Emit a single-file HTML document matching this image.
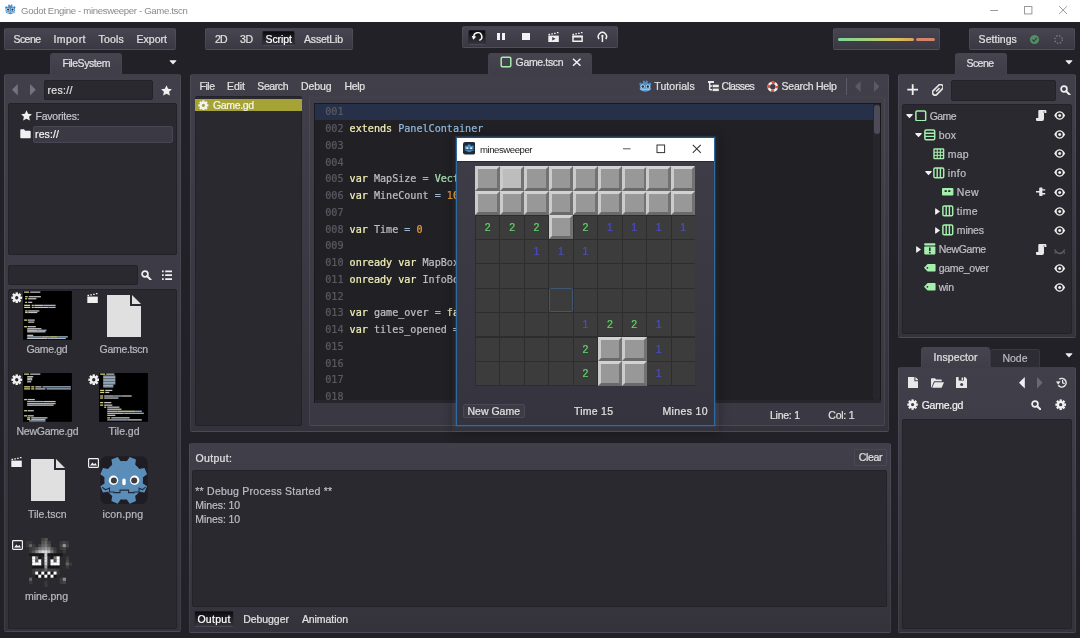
<!DOCTYPE html>
<html><head><meta charset="utf-8"><title>Godot Engine - minesweeper - Game.tscn</title>
<style>
html,body{margin:0;padding:0;}
body{width:1080px;height:638px;overflow:hidden;background:#222127;position:relative;font-family:"Liberation Sans",sans-serif;}
div,span,svg{position:absolute;box-sizing:border-box;}
.t{white-space:pre;-webkit-text-stroke:0.22px;}
.code{font-family:"DejaVu Sans Mono","Liberation Mono",monospace;}
</style></head><body><div id="root" style="left:0;top:0;width:1080px;height:638px;will-change:transform;">
<div style="left:0px;top:0px;width:1080px;height:22px;background:#ffffff;"></div>
<span class="t" style="left:21px;top:3.00px;line-height:16px;font-size:9.6px;color:#8a8a8a;letter-spacing:-0.332px;-webkit-text-stroke:0;">Godot Engine - minesweeper - Game.tscn</span>
<svg style="left:989px;top:4px;" width="12" height="12" viewBox="0 0 12 12"><path d="M1.2 6.5H9" stroke="#9a9a9a" stroke-width="1"/></svg>
<svg style="left:1023px;top:5px;" width="12" height="12" viewBox="0 0 12 12"><rect x="1.5" y="1.5" width="7.4" height="7.4" fill="none" stroke="#9a9a9a" stroke-width="1"/></svg>
<svg style="left:1058px;top:5px;" width="12" height="12" viewBox="0 0 12 12"><path d="M1.2 1.2L9 9M9 1.2L1.2 9" stroke="#9a9a9a" stroke-width="1"/></svg>
<div style="left:4px;top:28px;width:172px;height:22px;background:linear-gradient(180deg,#474551 0%,#3a3842 100%);border:1px solid rgba(255,255,255,0.06);border-radius:2px;"></div>
<span class="t" style="left:13.5px;top:31.00px;line-height:16px;font-size:10.5px;color:#e0e0e0;letter-spacing:-0.568px;">Scene</span>
<span class="t" style="left:53.5px;top:31.00px;line-height:16px;font-size:10.5px;color:#e0e0e0;letter-spacing:0.448px;">Import</span>
<span class="t" style="left:98.5px;top:31.00px;line-height:16px;font-size:10.5px;color:#e0e0e0;letter-spacing:0.172px;">Tools</span>
<span class="t" style="left:136.5px;top:31.00px;line-height:16px;font-size:10.5px;color:#e0e0e0;letter-spacing:0.031px;">Export</span>
<div style="left:205px;top:28px;width:148px;height:22px;background:linear-gradient(180deg,#474551 0%,#3a3842 100%);border:1px solid rgba(255,255,255,0.06);border-radius:2px;"></div>
<span class="t" style="left:215px;top:31.00px;line-height:16px;font-size:10.5px;color:#e0e0e0;letter-spacing:-0.923px;">2D</span>
<span class="t" style="left:240px;top:31.00px;line-height:16px;font-size:10.5px;color:#e0e0e0;letter-spacing:-0.423px;">3D</span>
<div style="left:262.2px;top:31.4px;width:32.8px;height:15px;background:linear-gradient(180deg,#0c0b0f 0%,#24232a 55%,#36343e 100%);border:1px solid #2e2d35;border-top-color:#1a191e;border-bottom-color:#4a4854;border-radius:2px;"></div>
<span class="t" style="left:265.5px;top:31.00px;line-height:16px;font-size:10.5px;color:#ffffff;letter-spacing:-0.068px;">Script</span>
<span class="t" style="left:304px;top:31.00px;line-height:16px;font-size:10.5px;color:#e0e0e0;letter-spacing:-0.182px;">AssetLib</span>
<div style="left:462px;top:26px;width:156px;height:22px;background:linear-gradient(180deg,#474551 0%,#3a3842 100%);border:1px solid rgba(255,255,255,0.06);border-radius:2px;"></div>
<div style="left:468.2px;top:29.8px;width:17.6px;height:15px;background:linear-gradient(180deg,#0c0b0f 0%,#24232a 55%,#36343e 100%);border:1px solid #2e2d35;border-top-color:#1a191e;border-bottom-color:#4a4854;border-radius:2px;"></div>
<svg style="left:471px;top:31px;" width="13" height="12" viewBox="0 0 13 12"><path d="M2.9 6.3A4 4 0 1 1 8.3 9.4" fill="none" stroke="#fff" stroke-width="1.45"/><path d="M0.7 4.9L5.3 5.5L2.3 8.8Z" fill="#fff"/></svg>
<div style="left:497.4px;top:32.9px;width:3px;height:7.5px;background:#f2f2f2;"></div>
<div style="left:502.3px;top:32.9px;width:3px;height:7.5px;background:#f2f2f2;"></div>
<div style="left:521.9px;top:32.9px;width:8.1px;height:7.5px;background:#f2f2f2;"></div>
<svg style="left:547.8px;top:32px;" width="11.5" height="10.5" viewBox="0 0 11.5 10.5"><path d="M0.5 2.5h1.6M3.3 1.9h1.6M6.1 1.3h1.6M8.9 0.7h1.6" stroke="#f0f0f0" stroke-width="1.3"/><path d="M0.3 3.6H10.8V10H0.3Z" fill="#f0f0f0"/><path d="M4.2 5L7.6 6.8L4.2 8.6Z" fill="#403e49"/></svg>
<svg style="left:571.8px;top:32px;" width="11.5" height="10.5" viewBox="0 0 11.5 10.5"><path d="M0.5 2.5h1.6M3.3 1.9h1.6M6.1 1.3h1.6M8.9 0.7h1.6" stroke="#f0f0f0" stroke-width="1.3"/><path d="M1 4.4H10.1V9.3H1Z" fill="none" stroke="#f0f0f0" stroke-width="1.5"/><path d="M0.3 3.6H10.8V5.4H0.3Z" fill="#f0f0f0"/></svg>
<svg style="left:596.8px;top:30.6px;" width="10.8" height="11.6" viewBox="0 0 10.8 11.6"><path d="M2.1 8A4.1 4.1 0 1 1 8.7 8" fill="none" stroke="#f2f2f2" stroke-width="1.5"/><path d="M5.4 4.6V11.4" stroke="#f2f2f2" stroke-width="1.5"/><circle cx="5.4" cy="4.9" r="1.1" fill="#f2f2f2"/></svg>
<div style="left:833px;top:28px;width:107px;height:22px;background:linear-gradient(180deg,#474551 0%,#3a3842 100%);border:1px solid rgba(255,255,255,0.06);border-radius:2px;"></div>
<div style="left:837.5px;top:37.7px;width:76.5px;height:3px;background:linear-gradient(90deg,#7fd79a 0%,#a9d07a 45%,#d8c25e 75%,#d9a060 100%);border-radius:1.5px;"></div>
<div style="left:915.5px;top:37.7px;width:19.5px;height:3px;background:#d4846a;border-radius:1.5px;"></div>
<div style="left:969px;top:28px;width:106px;height:22px;background:linear-gradient(180deg,#474551 0%,#3a3842 100%);border:1px solid rgba(255,255,255,0.06);border-radius:2px;"></div>
<span class="t" style="left:978.6px;top:31.00px;line-height:16px;font-size:10.5px;color:#e0e0e0;letter-spacing:0.037px;">Settings</span>
<svg style="left:1028.5px;top:33.5px;" width="11" height="11" viewBox="0 0 11 11"><circle cx="5.5" cy="5.5" r="4.6" fill="#4f9163"/><path d="M3.2 5.6L4.9 7.2L7.9 3.9" stroke="#403e49" stroke-width="1.3" fill="none"/></svg>
<svg style="left:1053px;top:33.5px;" width="11" height="11" viewBox="0 0 11 11"><circle cx="5.5" cy="5.5" r="3.8" fill="none" stroke="#77757f" stroke-width="1.6" stroke-dasharray="1.4 1.6"/></svg>
<div style="left:50px;top:53px;width:72px;height:21px;background:linear-gradient(180deg,#46444f 0%,#3f3d48 100%);border:1px solid #45434f;border-bottom:none;border-radius:3px 3px 0 0;"></div>
<span class="t" style="left:62.4px;top:54.60px;line-height:16px;font-size:10.5px;color:#e0e0e0;letter-spacing:-0.425px;">FileSystem</span>
<svg style="left:169px;top:59.5px;" width="8" height="5" viewBox="0 0 8 5"><path d="M0.5 0.8Q0.5 0.2 1.2 0.2H6.8Q7.5 0.2 7.5 0.8L4 4.6Z" fill="#f0f0f0"/></svg>
<div style="left:488px;top:53px;width:104px;height:21px;background:linear-gradient(180deg,#46444f 0%,#3f3d48 100%);border:1px solid #45434f;border-bottom:none;border-radius:3px 3px 0 0;"></div>
<svg style="left:500px;top:56.3px;" width="12" height="12" viewBox="0 0 12 12"><rect x="1.2" y="1.2" width="9.6" height="9.6" rx="1.2" fill="none" stroke="#a5efac" stroke-width="1.5"/></svg>
<span class="t" style="left:515.6px;top:54.40px;line-height:16px;font-size:10.5px;color:#e0e0e0;letter-spacing:-0.346px;">Game.tscn</span>
<svg style="left:571.5px;top:57.7px;" width="9.5" height="8.6" viewBox="0 0 9.5 8.6"><path d="M1 0.8L8.5 7.8M8.5 0.8L1 7.8" stroke="#f0f0f0" stroke-width="1.5"/></svg>
<div style="left:954.5px;top:53px;width:52px;height:21px;background:linear-gradient(180deg,#46444f 0%,#3f3d48 100%);border:1px solid #45434f;border-bottom:none;border-radius:3px 3px 0 0;"></div>
<span class="t" style="left:966.5px;top:54.60px;line-height:16px;font-size:10.5px;color:#e0e0e0;letter-spacing:-0.568px;">Scene</span>
<svg style="left:1065px;top:59.5px;" width="8" height="5" viewBox="0 0 8 5"><path d="M0.5 0.8Q0.5 0.2 1.2 0.2H6.8Q7.5 0.2 7.5 0.8L4 4.6Z" fill="#f0f0f0"/></svg>
<div style="left:4px;top:74px;width:177px;height:558px;background:linear-gradient(180deg,#413f4a 0%,#34323b 100%);border:1px solid rgba(255,255,255,0.06);border-radius:2px;"></div>
<svg style="left:12.4px;top:84.2px;" width="5.8" height="11.6" viewBox="0 0 5.8 11.6"><path d="M5.8 0V11.6L0 5.8Z" fill="#75737f"/></svg>
<svg style="left:30.4px;top:84.2px;" width="5.8" height="11.6" viewBox="0 0 5.8 11.6"><path d="M0 0V11.6L5.8 5.8Z" fill="#75737f"/></svg>
<div style="left:44px;top:80px;width:109px;height:20.4px;background:#2a2930;border:1px solid #232228;border-radius:2px;"></div>
<span class="t" style="left:47.5px;top:82.00px;line-height:16px;font-size:10.5px;color:#e0e0e0;letter-spacing:0.332px;">res://</span>
<svg style="left:161px;top:84.5px;" width="11" height="11" viewBox="0 0 11 11"><path d="M5.5 0.3L7.1 3.8L10.9 4.2L8.1 6.8L8.9 10.6L5.5 8.7L2.1 10.6L2.9 6.8L0.1 4.2L3.9 3.8Z" fill="#f0f0f0"/></svg>
<div style="left:8px;top:103px;width:169px;height:152px;background:#2a2930;border:1px solid #232228;border-radius:2px;"></div>
<svg style="left:20.5px;top:110px;" width="11" height="11" viewBox="0 0 11 11"><path d="M5.5 0.3L7.1 3.8L10.9 4.2L8.1 6.8L8.9 10.6L5.5 8.7L2.1 10.6L2.9 6.8L0.1 4.2L3.9 3.8Z" fill="#f0f0f0"/></svg>
<span class="t" style="left:35.5px;top:107.50px;line-height:16px;font-size:10.5px;color:#c4c3cb;letter-spacing:-0.222px;">Favorites:</span>
<div style="left:33px;top:125.7px;width:140px;height:17.2px;background:#3b3a44;border:1px solid #484652;border-radius:2px;"></div>
<svg style="left:20.3px;top:129.3px;" width="11" height="9.6" viewBox="0 0 11 9.6"><path d="M0.3 1Q0.3 0.3 1 0.3H4L5.2 1.8H10Q10.7 1.8 10.7 2.5V8.6Q10.7 9.3 10 9.3H1Q0.3 9.3 0.3 8.6Z" fill="#f0f0f0"/></svg>
<span class="t" style="left:35px;top:126.30px;line-height:16px;font-size:10.5px;color:#f4f4f4;letter-spacing:0.132px;">res://</span>
<div style="left:8px;top:265px;width:129.5px;height:19.5px;background:#2a2930;border:1px solid #232228;border-radius:2px;"></div>
<svg style="left:141px;top:269.5px;" width="10.5" height="10.5" viewBox="0 0 10.5 10.5"><circle cx="4" cy="4" r="2.9" fill="none" stroke="#f0f0f0" stroke-width="1.7"/><path d="M6.2 6.2L9.6 9.6" stroke="#f0f0f0" stroke-width="2" stroke-linecap="round"/></svg>
<svg style="left:161.5px;top:269.5px;" width="10" height="10.5" viewBox="0 0 10 10.5"><path d="M0 1.3h1.7M0 5.2h1.7M0 9.1h1.7" stroke="#f0f0f0" stroke-width="1.7"/><path d="M3.2 1.3H10M3.2 5.2H10M3.2 9.1H10" stroke="#f0f0f0" stroke-width="1.7"/></svg>
<div style="left:8px;top:288.5px;width:169px;height:340px;background:#2a2930;border:1px solid #232228;border-radius:2px;"></div>
<svg style="left:11px;top:291.7px;" width="11.5" height="11.5" viewBox="0 0 12 12"><g transform="translate(6 6)"><rect x="-1.25" y="-5.6" width="2.5" height="11.2" transform="rotate(0)" fill="#f0f0f0"/><rect x="-1.25" y="-5.6" width="2.5" height="11.2" transform="rotate(45)" fill="#f0f0f0"/><rect x="-1.25" y="-5.6" width="2.5" height="11.2" transform="rotate(90)" fill="#f0f0f0"/><rect x="-1.25" y="-5.6" width="2.5" height="11.2" transform="rotate(135)" fill="#f0f0f0"/><circle r="4" fill="#f0f0f0"/><circle r="1.7" fill="#2a2930"/></g></svg>
<svg style="left:22.9px;top:290.9px;" width="49" height="48.8" viewBox="0 0 48 48"><rect width="48" height="48" fill="#000"/><rect x="1" y="0.5" width="5" height="1.25" fill="#d8d47e"/><rect x="7" y="0.5" width="10" height="1.25" fill="#c4c4c4"/><rect x="2" y="5" width="2.5" height="1.25" fill="#d8d47e"/><rect x="5.5" y="5" width="12" height="1.25" fill="#c4c4c4"/><rect x="2" y="7" width="2" height="1.25" fill="#d8d47e"/><rect x="5" y="7" width="8" height="1.25" fill="#c4c4c4"/><rect x="2" y="10.5" width="2" height="1.25" fill="#d8d47e"/><rect x="5" y="10.5" width="4" height="1.25" fill="#c4c4c4"/><rect x="1" y="13.5" width="6" height="1.25" fill="#d8d47e"/><rect x="8.5" y="13.5" width="2" height="1.25" fill="#d8d47e"/><rect x="11" y="13.5" width="9" height="1.25" fill="#c4c4c4"/><rect x="20" y="13.5" width="12" height="1.25" fill="#a3b6c8"/><rect x="1" y="15.5" width="6" height="1.25" fill="#d8d47e"/><rect x="8.5" y="15.5" width="2" height="1.25" fill="#d8d47e"/><rect x="11" y="15.5" width="14" height="1.25" fill="#c4c4c4"/><rect x="25" y="15.5" width="7" height="1.25" fill="#a3b6c8"/><rect x="2" y="19" width="2.5" height="1.25" fill="#d8d47e"/><rect x="5" y="19" width="11" height="1.25" fill="#c4c4c4"/><rect x="2" y="20.5" width="2.5" height="1.25" fill="#d8d47e"/><rect x="5" y="20.5" width="9" height="1.25" fill="#c4c4c4"/><rect x="1" y="28" width="3" height="1.25" fill="#d8d47e"/><rect x="4.5" y="28" width="7" height="1.25" fill="#c4c4c4"/><rect x="5" y="30" width="6" height="1.25" fill="#c4c4c4"/><rect x="1" y="34.5" width="3" height="1.25" fill="#d8d47e"/><rect x="4.5" y="34.5" width="8" height="1.25" fill="#c4c4c4"/><rect x="4" y="36.5" width="14" height="1.25" fill="#c4c4c4"/><rect x="4" y="38" width="10" height="1.25" fill="#c4c4c4"/><rect x="14" y="38" width="9" height="1.25" fill="#a3b6c8"/><rect x="4" y="39.5" width="18" height="1.25" fill="#c4c4c4"/><rect x="4" y="43" width="6" height="1.25" fill="#c4c4c4"/><rect x="4" y="44.5" width="14" height="1.25" fill="#a3b6c8"/><rect x="18" y="44.5" width="8" height="1.25" fill="#c4c4c4"/><rect x="26" y="44.5" width="8" height="1.25" fill="#d8d47e"/><rect x="34" y="44.5" width="10" height="1.25" fill="#a3b6c8"/><rect x="4" y="46" width="20" height="1.25" fill="#c4c4c4"/><rect x="24" y="46" width="18" height="1.25" fill="#a3b6c8"/></svg>
<span class="t" style="left:26.5px;top:341.00px;line-height:16px;font-size:10.5px;color:#b8b7c0;letter-spacing:-0.348px;">Game.gd</span>
<svg style="left:87.4px;top:292.6px;" width="11.5" height="10.5" viewBox="0 0 11.5 10.5"><path d="M0.5 2.5h1.6M3.3 1.9h1.6M6.1 1.3h1.6M8.9 0.7h1.6" stroke="#f0f0f0" stroke-width="1.3"/><path d="M0.3 3.6H10.8V10H0.3Z" fill="#f0f0f0"/></svg>
<svg style="left:107px;top:294.5px;" width="34" height="42" viewBox="0 0 34 42"><path d="M0 0H23V11H34V42H0Z" fill="#e0e0e0"/><path d="M25 0L34 9H25Z" fill="#e0e0e0"/></svg>
<span class="t" style="left:99.6px;top:341.00px;line-height:16px;font-size:10.5px;color:#b8b7c0;letter-spacing:-0.296px;">Game.tscn</span>
<svg style="left:11px;top:373.7px;" width="11.5" height="11.5" viewBox="0 0 12 12"><g transform="translate(6 6)"><rect x="-1.25" y="-5.6" width="2.5" height="11.2" transform="rotate(0)" fill="#f0f0f0"/><rect x="-1.25" y="-5.6" width="2.5" height="11.2" transform="rotate(45)" fill="#f0f0f0"/><rect x="-1.25" y="-5.6" width="2.5" height="11.2" transform="rotate(90)" fill="#f0f0f0"/><rect x="-1.25" y="-5.6" width="2.5" height="11.2" transform="rotate(135)" fill="#f0f0f0"/><circle r="4" fill="#f0f0f0"/><circle r="1.7" fill="#2a2930"/></g></svg>
<svg style="left:22.9px;top:373.4px;" width="49" height="48.8" viewBox="0 0 48 48"><rect width="48" height="48" fill="#000"/><rect x="1" y="0.5" width="5" height="1.25" fill="#d8d47e"/><rect x="7" y="0.5" width="10" height="1.25" fill="#c4c4c4"/><rect x="4" y="3" width="6" height="1.25" fill="#c4c4c4"/><rect x="4" y="4.5" width="5" height="1.25" fill="#c4c4c4"/><rect x="4" y="6" width="5" height="1.25" fill="#c4c4c4"/><rect x="4" y="8" width="4" height="1.25" fill="#c4c4c4"/><rect x="1" y="13" width="6" height="1.25" fill="#d8d47e"/><rect x="8" y="13" width="3" height="1.25" fill="#d8d47e"/><rect x="12" y="13" width="6" height="1.25" fill="#c4c4c4"/><rect x="19" y="13" width="28" height="1.25" fill="#a3b6c8"/><rect x="1" y="15" width="6" height="1.25" fill="#d8d47e"/><rect x="8" y="15" width="3" height="1.25" fill="#d8d47e"/><rect x="12" y="15" width="10" height="1.25" fill="#c4c4c4"/><rect x="23" y="15" width="24" height="1.25" fill="#a3b6c8"/><rect x="1" y="25.5" width="3" height="1.25" fill="#d8d47e"/><rect x="4.5" y="25.5" width="7" height="1.25" fill="#c4c4c4"/><rect x="4" y="27.5" width="16" height="1.25" fill="#a3b6c8"/><rect x="20" y="27.5" width="12" height="1.25" fill="#c4c4c4"/><rect x="4" y="29.5" width="28" height="1.25" fill="#a3b6c8"/><rect x="4" y="31" width="26" height="1.25" fill="#c4c4c4"/><rect x="1" y="36.5" width="3" height="1.25" fill="#d8d47e"/><rect x="4.5" y="36.5" width="6" height="1.25" fill="#c4c4c4"/><rect x="1" y="41.5" width="3" height="1.25" fill="#d8d47e"/><rect x="4.5" y="41.5" width="6" height="1.25" fill="#c4c4c4"/><rect x="4" y="43.5" width="3" height="1.25" fill="#d8d47e"/><rect x="8" y="43.5" width="16" height="1.25" fill="#c4c4c4"/><rect x="4" y="45" width="3" height="1.25" fill="#d8d47e"/><rect x="8" y="45" width="14" height="1.25" fill="#a3b6c8"/><rect x="6" y="46.5" width="16" height="1.25" fill="#a3b6c8"/></svg>
<span class="t" style="left:16.5px;top:423.00px;line-height:16px;font-size:10.5px;color:#b8b7c0;letter-spacing:-0.244px;">NewGame.gd</span>
<svg style="left:87.5px;top:373.7px;" width="11.5" height="11.5" viewBox="0 0 12 12"><g transform="translate(6 6)"><rect x="-1.25" y="-5.6" width="2.5" height="11.2" transform="rotate(0)" fill="#f0f0f0"/><rect x="-1.25" y="-5.6" width="2.5" height="11.2" transform="rotate(45)" fill="#f0f0f0"/><rect x="-1.25" y="-5.6" width="2.5" height="11.2" transform="rotate(90)" fill="#f0f0f0"/><rect x="-1.25" y="-5.6" width="2.5" height="11.2" transform="rotate(135)" fill="#f0f0f0"/><circle r="4" fill="#f0f0f0"/><circle r="1.7" fill="#2a2930"/></g></svg>
<svg style="left:99.2px;top:373.4px;" width="49" height="48.8" viewBox="0 0 48 48"><rect width="48" height="48" fill="#000"/><rect x="1" y="0.5" width="5" height="1.25" fill="#d8d47e"/><rect x="7" y="0.5" width="8" height="1.25" fill="#c4c4c4"/><rect x="4" y="2.5" width="12" height="1.25" fill="#a3b6c8"/><rect x="4" y="4" width="12" height="1.25" fill="#a3b6c8"/><rect x="4" y="5.5" width="12" height="1.25" fill="#a3b6c8"/><rect x="4" y="7" width="12" height="1.25" fill="#a3b6c8"/><rect x="4" y="8.5" width="12" height="1.25" fill="#a3b6c8"/><rect x="4" y="10" width="12" height="1.25" fill="#a3b6c8"/><rect x="4" y="11.5" width="10" height="1.25" fill="#a3b6c8"/><rect x="4" y="13" width="10" height="1.25" fill="#a3b6c8"/><rect x="1" y="16.5" width="4" height="1.25" fill="#d8d47e"/><rect x="6" y="16.5" width="7" height="1.25" fill="#c4c4c4"/><rect x="1" y="18.5" width="4" height="1.25" fill="#d8d47e"/><rect x="6" y="18.5" width="4" height="1.25" fill="#c4c4c4"/><rect x="1" y="22" width="3" height="1.25" fill="#d8d47e"/><rect x="5" y="22" width="9" height="1.25" fill="#c4c4c4"/><rect x="14" y="22" width="8" height="1.25" fill="#a3b6c8"/><rect x="22" y="22" width="10" height="1.25" fill="#c4c4c4"/><rect x="1" y="24" width="3" height="1.25" fill="#d8d47e"/><rect x="5" y="24" width="14" height="1.25" fill="#c4c4c4"/><rect x="1" y="28.5" width="3" height="1.25" fill="#d8d47e"/><rect x="5" y="28.5" width="7" height="1.25" fill="#c4c4c4"/><rect x="1" y="31" width="3" height="1.25" fill="#d8d47e"/><rect x="5" y="31" width="8" height="1.25" fill="#c4c4c4"/><rect x="5" y="33" width="2" height="1.25" fill="#d8d47e"/><rect x="8" y="33" width="12" height="1.25" fill="#c4c4c4"/><rect x="8" y="35" width="14" height="1.25" fill="#c4c4c4"/><rect x="8" y="37" width="10" height="1.25" fill="#c4c4c4"/><rect x="18" y="37" width="18" height="1.25" fill="#d8d47e"/><rect x="36" y="37" width="6" height="1.25" fill="#a3b6c8"/><rect x="8" y="39" width="16" height="1.25" fill="#c4c4c4"/><rect x="24" y="39" width="20" height="1.25" fill="#a3b6c8"/><rect x="8" y="41" width="8" height="1.25" fill="#c4c4c4"/><rect x="8" y="43.5" width="3" height="1.25" fill="#d8d47e"/><rect x="12" y="43.5" width="18" height="1.25" fill="#c4c4c4"/><rect x="8" y="45.5" width="20" height="1.25" fill="#a3b6c8"/><rect x="28" y="45.5" width="14" height="1.25" fill="#c4c4c4"/></svg>
<span class="t" style="left:108.5px;top:423.00px;line-height:16px;font-size:10.5px;color:#b8b7c0;letter-spacing:-0.021px;">Tile.gd</span>
<svg style="left:11px;top:456.5px;" width="11.5" height="10.5" viewBox="0 0 11.5 10.5"><path d="M0.5 2.5h1.6M3.3 1.9h1.6M6.1 1.3h1.6M8.9 0.7h1.6" stroke="#f0f0f0" stroke-width="1.3"/><path d="M0.3 3.6H10.8V10H0.3Z" fill="#f0f0f0"/></svg>
<svg style="left:30.5px;top:459px;" width="34" height="42" viewBox="0 0 34 42"><path d="M0 0H23V11H34V42H0Z" fill="#e0e0e0"/><path d="M25 0L34 9H25Z" fill="#e0e0e0"/></svg>
<span class="t" style="left:28px;top:506.00px;line-height:16px;font-size:10.5px;color:#b8b7c0;letter-spacing:-0.025px;">Tile.tscn</span>
<svg style="left:88px;top:457.5px;" width="11" height="10" viewBox="0 0 11 10"><rect x="0.6" y="0.6" width="9.8" height="8.8" rx="0.8" fill="none" stroke="#f0f0f0" stroke-width="1.2"/><path d="M2 7.6L4.4 4.6L6 6.2L7.4 5L9 7.6Z" fill="#f0f0f0"/></svg>
<svg style="left:100px;top:456.4px;" width="48" height="48.4" viewBox="0 0 48 48.4"><rect x="0.3" y="0.3" width="47.4" height="47.8" rx="6.5" fill="#1f1d24"/>
<path d="M26.6 5.4 L29.7 0.9 L36.0 3.5 L35.1 8.9 L39.1 12.9 L44.5 12.0 L47.1 18.3 L42.6 21.4 L42.6 27.2 L47.1 30.3 L44.5 36.6 L39.1 35.7 L35.1 39.7 L36.0 45.1 L29.7 47.7 L26.6 43.2 L20.8 43.2 L17.7 47.7 L11.4 45.1 L12.3 39.7 L8.3 35.7 L2.9 36.6 L0.3 30.3 L4.8 27.2 L4.8 21.4 L0.3 18.3 L2.9 12.0 L8.3 12.9 L12.3 8.9 L11.4 3.5 L17.7 0.9 L20.8 5.4Z" fill="#5b8db9"/><circle cx="23.7" cy="24.3" r="19.3" fill="#5b8db9"/>
<path d="M2.2 31.2L5.6 33.8L9.5 32.1V36H14V36.6H20V34.1H28.6V36.6H34.1V36H39.1V32.1L42.4 33.8L45.6 31.2" fill="none" stroke="#232a3a" stroke-width="1.1"/>
<circle cx="13.5" cy="24.3" r="4.7" fill="#fff"/><circle cx="34.6" cy="24.3" r="4.7" fill="#fff"/>
<circle cx="13.9" cy="24.4" r="3" fill="#3c3b40"/><circle cx="34.2" cy="24.4" r="3" fill="#3c3b40"/>
<rect x="22.3" y="22.4" width="3.4" height="6.8" rx="1.6" fill="#fff"/></svg>
<span class="t" style="left:102.5px;top:506.00px;line-height:16px;font-size:10.5px;color:#b8b7c0;letter-spacing:0.114px;">icon.png</span>
<svg style="left:11.5px;top:539.5px;" width="11" height="10" viewBox="0 0 11 10"><rect x="0.6" y="0.6" width="9.8" height="8.8" rx="0.8" fill="none" stroke="#f0f0f0" stroke-width="1.2"/><path d="M2 7.6L4.4 4.6L6 6.2L7.4 5L9 7.6Z" fill="#f0f0f0"/></svg>
<svg style="left:22.85px;top:538.2px;filter:blur(0.55px);" width="48.9" height="48.9" viewBox="0 0 16 16"><rect x="6" y="0" width="1.09" height="1.09" fill="#444444"/><rect x="7" y="0" width="1.09" height="1.09" fill="#555555"/><rect x="1" y="1" width="1.09" height="1.09" fill="#3a3a3d"/><rect x="2" y="1" width="1.09" height="1.09" fill="#3a3a3d"/><rect x="6" y="1" width="1.09" height="1.09" fill="#555555"/><rect x="7" y="1" width="1.09" height="1.09" fill="#666666"/><rect x="8" y="1" width="1.09" height="1.09" fill="#444444"/><rect x="12" y="1" width="1.09" height="1.09" fill="#3a3a3d"/><rect x="13" y="1" width="1.09" height="1.09" fill="#444444"/><rect x="14" y="1" width="1.09" height="1.09" fill="#3a3a3d"/><rect x="1" y="2" width="1.09" height="1.09" fill="#3a3a3d"/><rect x="2" y="2" width="1.09" height="1.09" fill="#666666"/><rect x="3" y="2" width="1.09" height="1.09" fill="#3a3a3d"/><rect x="5" y="2" width="1.09" height="1.09" fill="#444444"/><rect x="6" y="2" width="1.09" height="1.09" fill="#666666"/><rect x="7" y="2" width="1.09" height="1.09" fill="#777777"/><rect x="8" y="2" width="1.09" height="1.09" fill="#555555"/><rect x="12" y="2" width="1.09" height="1.09" fill="#444444"/><rect x="13" y="2" width="1.09" height="1.09" fill="#999999"/><rect x="14" y="2" width="1.09" height="1.09" fill="#444444"/><rect x="2" y="3" width="1.09" height="1.09" fill="#3a3a3d"/><rect x="3" y="3" width="1.09" height="1.09" fill="#444444"/><rect x="4" y="3" width="1.09" height="1.09" fill="#555555"/><rect x="5" y="3" width="1.09" height="1.09" fill="#777777"/><rect x="6" y="3" width="1.09" height="1.09" fill="#888888"/><rect x="7" y="3" width="1.09" height="1.09" fill="#999999"/><rect x="8" y="3" width="1.09" height="1.09" fill="#888888"/><rect x="9" y="3" width="1.09" height="1.09" fill="#555555"/><rect x="10" y="3" width="1.09" height="1.09" fill="#3a3a3d"/><rect x="11" y="3" width="1.09" height="1.09" fill="#2b2b2e"/><rect x="12" y="3" width="1.09" height="1.09" fill="#3a3a3d"/><rect x="13" y="3" width="1.09" height="1.09" fill="#444444"/><rect x="2" y="4" width="1.09" height="1.09" fill="#3a3a3d"/><rect x="3" y="4" width="1.09" height="1.09" fill="#555555"/><rect x="4" y="4" width="1.09" height="1.09" fill="#888888"/><rect x="5" y="4" width="1.09" height="1.09" fill="#bbbbbb"/><rect x="6" y="4" width="1.09" height="1.09" fill="#dddddd"/><rect x="7" y="4" width="1.09" height="1.09" fill="#dddddd"/><rect x="8" y="4" width="1.09" height="1.09" fill="#bbbbbb"/><rect x="9" y="4" width="1.09" height="1.09" fill="#777777"/><rect x="10" y="4" width="1.09" height="1.09" fill="#444444"/><rect x="11" y="4" width="1.09" height="1.09" fill="#2b2b2e"/><rect x="12" y="4" width="1.09" height="1.09" fill="#2b2b2e"/><rect x="13" y="4" width="1.09" height="1.09" fill="#3a3a3d"/><rect x="1" y="5" width="1.09" height="1.09" fill="#2b2b2e"/><rect x="2" y="5" width="1.09" height="1.09" fill="#17171a"/><rect x="3" y="5" width="1.09" height="1.09" fill="#17171a"/><rect x="4" y="5" width="1.09" height="1.09" fill="#17171a"/><rect x="5" y="5" width="1.09" height="1.09" fill="#17171a"/><rect x="6" y="5" width="1.09" height="1.09" fill="#17171a"/><rect x="7" y="5" width="1.09" height="1.09" fill="#cccccc"/><rect x="8" y="5" width="1.09" height="1.09" fill="#17171a"/><rect x="9" y="5" width="1.09" height="1.09" fill="#17171a"/><rect x="10" y="5" width="1.09" height="1.09" fill="#17171a"/><rect x="11" y="5" width="1.09" height="1.09" fill="#17171a"/><rect x="12" y="5" width="1.09" height="1.09" fill="#17171a"/><rect x="13" y="5" width="1.09" height="1.09" fill="#2b2b2e"/><rect x="1" y="6" width="1.09" height="1.09" fill="#2b2b2e"/><rect x="2" y="6" width="1.09" height="1.09" fill="#2b2b2e"/><rect x="3" y="6" width="1.09" height="1.09" fill="#ffffff"/><rect x="4" y="6" width="1.09" height="1.09" fill="#777777"/><rect x="5" y="6" width="1.09" height="1.09" fill="#17171a"/><rect x="6" y="6" width="1.09" height="1.09" fill="#2b2b2e"/><rect x="7" y="6" width="1.09" height="1.09" fill="#dddddd"/><rect x="8" y="6" width="1.09" height="1.09" fill="#2b2b2e"/><rect x="9" y="6" width="1.09" height="1.09" fill="#17171a"/><rect x="10" y="6" width="1.09" height="1.09" fill="#777777"/><rect x="11" y="6" width="1.09" height="1.09" fill="#ffffff"/><rect x="12" y="6" width="1.09" height="1.09" fill="#2b2b2e"/><rect x="13" y="6" width="1.09" height="1.09" fill="#2b2b2e"/><rect x="14" y="6" width="1.09" height="1.09" fill="#3a3a3d"/><rect x="1" y="7" width="1.09" height="1.09" fill="#2b2b2e"/><rect x="2" y="7" width="1.09" height="1.09" fill="#2b2b2e"/><rect x="3" y="7" width="1.09" height="1.09" fill="#ffffff"/><rect x="4" y="7" width="1.09" height="1.09" fill="#555555"/><rect x="5" y="7" width="1.09" height="1.09" fill="#ffffff"/><rect x="6" y="7" width="1.09" height="1.09" fill="#2b2b2e"/><rect x="7" y="7" width="1.09" height="1.09" fill="#dddddd"/><rect x="8" y="7" width="1.09" height="1.09" fill="#2b2b2e"/><rect x="9" y="7" width="1.09" height="1.09" fill="#ffffff"/><rect x="10" y="7" width="1.09" height="1.09" fill="#555555"/><rect x="11" y="7" width="1.09" height="1.09" fill="#ffffff"/><rect x="12" y="7" width="1.09" height="1.09" fill="#2b2b2e"/><rect x="13" y="7" width="1.09" height="1.09" fill="#2b2b2e"/><rect x="14" y="7" width="1.09" height="1.09" fill="#444444"/><rect x="1" y="8" width="1.09" height="1.09" fill="#2b2b2e"/><rect x="2" y="8" width="1.09" height="1.09" fill="#2b2b2e"/><rect x="3" y="8" width="1.09" height="1.09" fill="#ffffff"/><rect x="4" y="8" width="1.09" height="1.09" fill="#ffffff"/><rect x="5" y="8" width="1.09" height="1.09" fill="#ffffff"/><rect x="6" y="8" width="1.09" height="1.09" fill="#2b2b2e"/><rect x="7" y="8" width="1.09" height="1.09" fill="#cccccc"/><rect x="8" y="8" width="1.09" height="1.09" fill="#2b2b2e"/><rect x="9" y="8" width="1.09" height="1.09" fill="#ffffff"/><rect x="10" y="8" width="1.09" height="1.09" fill="#ffffff"/><rect x="11" y="8" width="1.09" height="1.09" fill="#ffffff"/><rect x="12" y="8" width="1.09" height="1.09" fill="#2b2b2e"/><rect x="13" y="8" width="1.09" height="1.09" fill="#2b2b2e"/><rect x="14" y="8" width="1.09" height="1.09" fill="#666666"/><rect x="15" y="8" width="1.09" height="1.09" fill="#3a3a3d"/><rect x="1" y="9" width="1.09" height="1.09" fill="#2b2b2e"/><rect x="2" y="9" width="1.09" height="1.09" fill="#2b2b2e"/><rect x="3" y="9" width="1.09" height="1.09" fill="#17171a"/><rect x="4" y="9" width="1.09" height="1.09" fill="#17171a"/><rect x="5" y="9" width="1.09" height="1.09" fill="#17171a"/><rect x="6" y="9" width="1.09" height="1.09" fill="#17171a"/><rect x="7" y="9" width="1.09" height="1.09" fill="#999999"/><rect x="8" y="9" width="1.09" height="1.09" fill="#17171a"/><rect x="9" y="9" width="1.09" height="1.09" fill="#17171a"/><rect x="10" y="9" width="1.09" height="1.09" fill="#17171a"/><rect x="11" y="9" width="1.09" height="1.09" fill="#17171a"/><rect x="12" y="9" width="1.09" height="1.09" fill="#2b2b2e"/><rect x="13" y="9" width="1.09" height="1.09" fill="#2b2b2e"/><rect x="14" y="9" width="1.09" height="1.09" fill="#3a3a3d"/><rect x="2" y="10" width="1.09" height="1.09" fill="#2b2b2e"/><rect x="3" y="10" width="1.09" height="1.09" fill="#3a3a3d"/><rect x="4" y="10" width="1.09" height="1.09" fill="#444444"/><rect x="5" y="10" width="1.09" height="1.09" fill="#444444"/><rect x="6" y="10" width="1.09" height="1.09" fill="#444444"/><rect x="7" y="10" width="1.09" height="1.09" fill="#666666"/><rect x="8" y="10" width="1.09" height="1.09" fill="#444444"/><rect x="9" y="10" width="1.09" height="1.09" fill="#444444"/><rect x="10" y="10" width="1.09" height="1.09" fill="#444444"/><rect x="11" y="10" width="1.09" height="1.09" fill="#3a3a3d"/><rect x="12" y="10" width="1.09" height="1.09" fill="#2b2b2e"/><rect x="13" y="10" width="1.09" height="1.09" fill="#2b2b2e"/><rect x="2" y="11" width="1.09" height="1.09" fill="#2b2b2e"/><rect x="3" y="11" width="1.09" height="1.09" fill="#3a3a3d"/><rect x="4" y="11" width="1.09" height="1.09" fill="#ffffff"/><rect x="5" y="11" width="1.09" height="1.09" fill="#17171a"/><rect x="6" y="11" width="1.09" height="1.09" fill="#ffffff"/><rect x="7" y="11" width="1.09" height="1.09" fill="#17171a"/><rect x="8" y="11" width="1.09" height="1.09" fill="#ffffff"/><rect x="9" y="11" width="1.09" height="1.09" fill="#17171a"/><rect x="10" y="11" width="1.09" height="1.09" fill="#ffffff"/><rect x="11" y="11" width="1.09" height="1.09" fill="#3a3a3d"/><rect x="12" y="11" width="1.09" height="1.09" fill="#2b2b2e"/><rect x="2" y="12" width="1.09" height="1.09" fill="#2b2b2e"/><rect x="3" y="12" width="1.09" height="1.09" fill="#2b2b2e"/><rect x="4" y="12" width="1.09" height="1.09" fill="#17171a"/><rect x="5" y="12" width="1.09" height="1.09" fill="#ffffff"/><rect x="6" y="12" width="1.09" height="1.09" fill="#17171a"/><rect x="7" y="12" width="1.09" height="1.09" fill="#ffffff"/><rect x="8" y="12" width="1.09" height="1.09" fill="#17171a"/><rect x="9" y="12" width="1.09" height="1.09" fill="#ffffff"/><rect x="10" y="12" width="1.09" height="1.09" fill="#17171a"/><rect x="11" y="12" width="1.09" height="1.09" fill="#2b2b2e"/><rect x="12" y="12" width="1.09" height="1.09" fill="#2b2b2e"/><rect x="2" y="13" width="1.09" height="1.09" fill="#666666"/><rect x="3" y="13" width="1.09" height="1.09" fill="#2b2b2e"/><rect x="4" y="13" width="1.09" height="1.09" fill="#2b2b2e"/><rect x="5" y="13" width="1.09" height="1.09" fill="#2b2b2e"/><rect x="6" y="13" width="1.09" height="1.09" fill="#2b2b2e"/><rect x="7" y="13" width="1.09" height="1.09" fill="#2b2b2e"/><rect x="8" y="13" width="1.09" height="1.09" fill="#2b2b2e"/><rect x="9" y="13" width="1.09" height="1.09" fill="#2b2b2e"/><rect x="10" y="13" width="1.09" height="1.09" fill="#2b2b2e"/><rect x="11" y="13" width="1.09" height="1.09" fill="#2b2b2e"/><rect x="12" y="13" width="1.09" height="1.09" fill="#3a3a3d"/><rect x="13" y="13" width="1.09" height="1.09" fill="#888888"/><rect x="2" y="14" width="1.09" height="1.09" fill="#3a3a3d"/><rect x="4" y="14" width="1.09" height="1.09" fill="#2b2b2e"/><rect x="5" y="14" width="1.09" height="1.09" fill="#2b2b2e"/><rect x="6" y="14" width="1.09" height="1.09" fill="#2b2b2e"/><rect x="7" y="14" width="1.09" height="1.09" fill="#3a3a3d"/><rect x="8" y="14" width="1.09" height="1.09" fill="#2b2b2e"/><rect x="9" y="14" width="1.09" height="1.09" fill="#2b2b2e"/><rect x="10" y="14" width="1.09" height="1.09" fill="#2b2b2e"/><rect x="12" y="14" width="1.09" height="1.09" fill="#3a3a3d"/><rect x="13" y="14" width="1.09" height="1.09" fill="#444444"/><rect x="7" y="15" width="1.09" height="1.09" fill="#3a3a3d"/></svg>
<span class="t" style="left:25px;top:588.00px;line-height:16px;font-size:10.5px;color:#b8b7c0;letter-spacing:-0.028px;">mine.png</span>
<div style="left:190px;top:73.5px;width:699px;height:358.5px;background:linear-gradient(180deg,#413f4a 0%,#34323b 100%);border:1px solid rgba(255,255,255,0.06);border-radius:2px;"></div>
<span class="t" style="left:199.5px;top:78.00px;line-height:16px;font-size:10.5px;color:#e0e0e0;letter-spacing:-0.473px;">File</span>
<span class="t" style="left:227px;top:78.00px;line-height:16px;font-size:10.5px;color:#e0e0e0;letter-spacing:-0.031px;">Edit</span>
<span class="t" style="left:257.3px;top:78.00px;line-height:16px;font-size:10.5px;color:#e0e0e0;letter-spacing:-0.414px;">Search</span>
<span class="t" style="left:301px;top:78.00px;line-height:16px;font-size:10.5px;color:#e0e0e0;letter-spacing:-0.111px;">Debug</span>
<span class="t" style="left:344.5px;top:78.00px;line-height:16px;font-size:10.5px;color:#e0e0e0;letter-spacing:-0.365px;">Help</span>
<div style="left:194.5px;top:96px;width:107.5px;height:330px;background:#2a2930;border:1px solid #232228;border-radius:2px;"></div>
<div style="left:194.5px;top:99.3px;width:107.5px;height:12px;background:#a5a236;"></div>
<svg style="left:198.3px;top:99.6px;" width="10.8" height="10.8" viewBox="0 0 12 12"><g transform="translate(6 6)"><rect x="-1.25" y="-5.6" width="2.5" height="11.2" transform="rotate(0)" fill="#f4f4f4"/><rect x="-1.25" y="-5.6" width="2.5" height="11.2" transform="rotate(45)" fill="#f4f4f4"/><rect x="-1.25" y="-5.6" width="2.5" height="11.2" transform="rotate(90)" fill="#f4f4f4"/><rect x="-1.25" y="-5.6" width="2.5" height="11.2" transform="rotate(135)" fill="#f4f4f4"/><circle r="4" fill="#f4f4f4"/><circle r="1.7" fill="#a5a236"/></g></svg>
<span class="t" style="left:213px;top:96.90px;line-height:16px;font-size:10.5px;color:#f4f4f4;letter-spacing:-0.365px;">Game.gd</span>
<div style="left:309px;top:96.5px;width:576px;height:329.5px;background:linear-gradient(180deg,#403e49,#3a3842);border:1px solid rgba(255,255,255,0.06);border-radius:2px;"></div>
<div style="left:313.5px;top:102.8px;width:567.5px;height:300.7px;background:#212025;border:1px solid #1a191e;"></div>
<div style="left:314.5px;top:103.5px;width:559px;height:16.3px;background:#273049;"></div>
<div style="left:873.3px;top:104px;width:7.2px;height:295.6px;background:#27262c;border-radius:3px;"></div>
<div style="left:873.8px;top:105px;width:6.2px;height:29px;background:#4d4b57;border-radius:3px;"></div>
<span class="t code" style="left:325.3px;top:104.30px;line-height:16px;font-size:10.1px;color:#5b5a63">001</span>
<span class="t code" style="left:325.3px;top:121.05px;line-height:16px;font-size:10.1px;color:#5b5a63">002</span>
<span class="t code" style="left:349.6px;top:121.05px;line-height:16px;font-size:10.1px;"><span style="position:static;color:#f2efb6">extends</span><span style="position:static;color:#8fb9de"> PanelContainer</span></span>
<span class="t code" style="left:325.3px;top:137.80px;line-height:16px;font-size:10.1px;color:#5b5a63">003</span>
<span class="t code" style="left:325.3px;top:154.55px;line-height:16px;font-size:10.1px;color:#5b5a63">004</span>
<span class="t code" style="left:325.3px;top:171.30px;line-height:16px;font-size:10.1px;color:#5b5a63">005</span>
<span class="t code" style="left:349.6px;top:171.30px;line-height:16px;font-size:10.1px;"><span style="position:static;color:#f2efb6">var</span><span style="position:static;color:#bebec5"> MapSize </span><span style="position:static;color:#9db4d0">=</span><span style="position:static;color:#a9e3b3"> Vector2</span></span>
<span class="t code" style="left:325.3px;top:188.05px;line-height:16px;font-size:10.1px;color:#5b5a63">006</span>
<span class="t code" style="left:349.6px;top:188.05px;line-height:16px;font-size:10.1px;"><span style="position:static;color:#f2efb6">var</span><span style="position:static;color:#bebec5"> MineCount </span><span style="position:static;color:#9db4d0">=</span><span style="position:static;color:#e89a3e"> 10</span></span>
<span class="t code" style="left:325.3px;top:204.80px;line-height:16px;font-size:10.1px;color:#5b5a63">007</span>
<span class="t code" style="left:325.3px;top:221.55px;line-height:16px;font-size:10.1px;color:#5b5a63">008</span>
<span class="t code" style="left:349.6px;top:221.55px;line-height:16px;font-size:10.1px;"><span style="position:static;color:#f2efb6">var</span><span style="position:static;color:#bebec5"> Time </span><span style="position:static;color:#9db4d0">=</span><span style="position:static;color:#e89a3e"> 0</span></span>
<span class="t code" style="left:325.3px;top:238.30px;line-height:16px;font-size:10.1px;color:#5b5a63">009</span>
<span class="t code" style="left:325.3px;top:255.05px;line-height:16px;font-size:10.1px;color:#5b5a63">010</span>
<span class="t code" style="left:349.6px;top:255.05px;line-height:16px;font-size:10.1px;"><span style="position:static;color:#f2efb6">onready var</span><span style="position:static;color:#bebec5"> MapBox</span></span>
<span class="t code" style="left:325.3px;top:271.80px;line-height:16px;font-size:10.1px;color:#5b5a63">011</span>
<span class="t code" style="left:349.6px;top:271.80px;line-height:16px;font-size:10.1px;"><span style="position:static;color:#f2efb6">onready var</span><span style="position:static;color:#bebec5"> InfoBox</span></span>
<span class="t code" style="left:325.3px;top:288.55px;line-height:16px;font-size:10.1px;color:#5b5a63">012</span>
<span class="t code" style="left:325.3px;top:305.30px;line-height:16px;font-size:10.1px;color:#5b5a63">013</span>
<span class="t code" style="left:349.6px;top:305.30px;line-height:16px;font-size:10.1px;"><span style="position:static;color:#f2efb6">var</span><span style="position:static;color:#bebec5"> game_over </span><span style="position:static;color:#9db4d0">=</span><span style="position:static;color:#f2efb6"> false</span></span>
<span class="t code" style="left:325.3px;top:322.05px;line-height:16px;font-size:10.1px;color:#5b5a63">014</span>
<span class="t code" style="left:349.6px;top:322.05px;line-height:16px;font-size:10.1px;"><span style="position:static;color:#f2efb6">var</span><span style="position:static;color:#bebec5"> tiles_opened </span><span style="position:static;color:#9db4d0">=</span><span style="position:static;color:#e89a3e"> 0</span></span>
<span class="t code" style="left:325.3px;top:338.80px;line-height:16px;font-size:10.1px;color:#5b5a63">015</span>
<span class="t code" style="left:325.3px;top:355.55px;line-height:16px;font-size:10.1px;color:#5b5a63">016</span>
<span class="t code" style="left:325.3px;top:372.30px;line-height:16px;font-size:10.1px;color:#5b5a63">017</span>
<span class="t code" style="left:325.3px;top:389.05px;line-height:16px;font-size:10.1px;color:#5b5a63">018</span>
<div style="left:314.5px;top:399.6px;width:566px;height:3.4px;background:#27262c;"></div>
<span class="t" style="left:770px;top:407.00px;line-height:16px;font-size:10.5px;color:#e0e0e0;letter-spacing:-0.254px;">Line: 1</span>
<span class="t" style="left:828.3px;top:407.00px;line-height:16px;font-size:10.5px;color:#e0e0e0;letter-spacing:-0.226px;">Col: 1</span>
<svg style="left:637.65px;top:78.6px;" width="14.6" height="14.1" viewBox="0 0 12.6 12.2"><path d="M0.9 4.4L2.2 3.1L3.3 3.9L4.3 3.4L4.1 1.8L5.5 1.4L6 2.6H6.6L7.1 1.4L8.5 1.8L8.3 3.4L9.3 3.9L10.4 3.1L11.7 4.4L11 5.4V8.7Q11 9.6 10.1 9.9L6.3 11.2L2.5 9.9Q1.6 9.6 1.6 8.7V5.4Z" fill="#4b8fc9"/>
<circle cx="4" cy="6.5" r="1.75" fill="#e4ecf4"/><circle cx="8.6" cy="6.5" r="1.75" fill="#e4ecf4"/><circle cx="4.1" cy="6.6" r="1.15" fill="#2c3444"/><circle cx="8.5" cy="6.6" r="1.15" fill="#2c3444"/>
<path d="M1.6 8.5L3.4 8.9V9.5H5.2V8.8H7.4V9.5H9.2V8.9L11 8.5" stroke="#dfe8f2" stroke-width="0.6" fill="none"/></svg>
<span class="t" style="left:654.3px;top:78.00px;line-height:16px;font-size:10.5px;color:#e0e0e0;letter-spacing:0.066px;">Tutorials</span>
<svg style="left:707.5px;top:81px;" width="11" height="10.5" viewBox="0 0 11 10.5"><path d="M0 0.9H5.6M1.7 1V8.9M1.7 4.9H4M1.7 8.8H4" stroke="#e8e8e8" stroke-width="1.5" fill="none"/><rect x="4.6" y="3.7" width="6.2" height="2.5" fill="#e8e8e8"/><rect x="4.6" y="7.6" width="6.2" height="2.5" fill="#e8e8e8"/><rect x="0" y="0" width="6" height="2" fill="#e8e8e8"/></svg>
<span class="t" style="left:721.5px;top:78.00px;line-height:16px;font-size:10.5px;color:#e0e0e0;letter-spacing:-0.674px;">Classes</span>
<svg style="left:767px;top:80.5px;" width="11.6" height="11.6" viewBox="0 0 11.6 11.6"><circle cx="5.8" cy="5.8" r="4.1" fill="none" stroke="#f0f0f0" stroke-width="2.6"/><circle cx="5.8" cy="5.8" r="4.1" fill="none" stroke="#e2553b" stroke-width="2.6" stroke-dasharray="3.22 3.22" stroke-dashoffset="1.6"/></svg>
<span class="t" style="left:781.6px;top:78.00px;line-height:16px;font-size:10.5px;color:#e0e0e0;letter-spacing:-0.258px;">Search Help</span>
<div style="left:845.5px;top:77.5px;width:1.2px;height:17.5px;background:#5d5b68;"></div>
<svg style="left:855px;top:81px;" width="5.6" height="11" viewBox="0 0 5.6 11"><path d="M5.6 0V11L0 5.5Z" fill="#5c5a67"/></svg>
<svg style="left:873.5px;top:81px;" width="5.6" height="11" viewBox="0 0 5.6 11"><path d="M0 0V11L5.6 5.5Z" fill="#5c5a67"/></svg>
<div style="left:188.5px;top:443px;width:702.5px;height:190px;background:linear-gradient(180deg,#413f4a 0%,#34323b 100%);border:1px solid rgba(255,255,255,0.06);border-radius:2px;"></div>
<span class="t" style="left:195.5px;top:449.60px;line-height:16px;font-size:10.5px;color:#e0e0e0;letter-spacing:0.327px;">Output:</span>
<div style="left:853.5px;top:448.6px;width:33.5px;height:17.9px;background:#3f3d48;border:1px solid #4b4956;border-radius:2px;"></div>
<span class="t" style="left:858.7px;top:449.00px;line-height:16px;font-size:10.5px;color:#e0e0e0;letter-spacing:-0.348px;">Clear</span>
<div style="left:192px;top:470px;width:695px;height:136.5px;background:#2a2930;border:1px solid #232228;border-radius:2px;"></div>
<span class="t" style="left:195.3px;top:483.40px;line-height:16px;font-size:10.5px;color:#bdbcc5;letter-spacing:0.233px;">** Debug Process Started **</span>
<span class="t" style="left:195.3px;top:497.20px;line-height:16px;font-size:10.5px;color:#bdbcc5;letter-spacing:-0.078px;">Mines: 10</span>
<span class="t" style="left:195.3px;top:511.20px;line-height:16px;font-size:10.5px;color:#bdbcc5;letter-spacing:-0.078px;">Mines: 10</span>
<div style="left:194px;top:611.3px;width:39.6px;height:15.5px;background:linear-gradient(180deg,#0c0b0f 0%,#24232a 55%,#36343e 100%);border:1px solid #2e2d35;border-top-color:#1a191e;border-bottom-color:#4a4854;border-radius:2px;"></div>
<span class="t" style="left:197.4px;top:611.00px;line-height:16px;font-size:10.5px;color:#ffffff;letter-spacing:0.296px;">Output</span>
<span class="t" style="left:243.3px;top:611.00px;line-height:16px;font-size:10.5px;color:#e0e0e0;letter-spacing:-0.074px;">Debugger</span>
<span class="t" style="left:301.9px;top:611.00px;line-height:16px;font-size:10.5px;color:#e0e0e0;letter-spacing:-0.074px;">Animation</span>
<div style="left:898px;top:73.5px;width:178px;height:264.5px;background:linear-gradient(180deg,#413f4a 0%,#34323b 100%);border:1px solid rgba(255,255,255,0.06);border-radius:2px;"></div>
<svg style="left:907px;top:84.2px;" width="11.4" height="11.4" viewBox="0 0 11.4 11.4"><path d="M5.7 0.3V11.1M0.3 5.7H11.1" stroke="#f0f0f0" stroke-width="1.8"/></svg>
<svg style="left:931.5px;top:84.2px;" width="11.6" height="11.6" viewBox="0 0 11.6 11.6"><g transform="rotate(-45 5.8 5.8)" fill="none" stroke="#e6e6e6"><rect x="-0.6" y="3.2" width="12.8" height="5.2" rx="2.6" stroke-width="1.7"/><path d="M3.4 5.8H8.2" stroke-width="1.6"/></g></svg>
<div style="left:951px;top:80px;width:105px;height:20.6px;background:#2a2930;border:1px solid #232228;border-radius:2px;"></div>
<svg style="left:1060px;top:84.7px;" width="10.5" height="10.5" viewBox="0 0 10.5 10.5"><circle cx="4" cy="4" r="2.9" fill="none" stroke="#f0f0f0" stroke-width="1.7"/><path d="M6.2 6.2L9.6 9.6" stroke="#f0f0f0" stroke-width="2" stroke-linecap="round"/></svg>
<div style="left:902.3px;top:103.8px;width:169.7px;height:230.7px;background:#2a2930;border:1px solid #232228;border-radius:2px;"></div>
<svg style="left:906.4px;top:114.0px;" width="7" height="4.4" viewBox="0 0 7 4.4"><path d="M0.2 0.7Q0.2 0 0.9 0H6.1Q6.8 0 6.8 0.7L3.5 4.3Z" fill="#f0f0f0"/></svg>
<svg style="left:915.0px;top:109.89999999999999px;" width="11.6" height="11.6" viewBox="0 0 11.6 11.6"><rect x="0.9" y="0.9" width="9.8" height="9.8" rx="1.3" fill="none" stroke="#a5efac" stroke-width="1.5"/></svg>
<span class="t" style="left:929.7px;top:107.60px;line-height:16px;font-size:10.5px;color:#bfbec7;letter-spacing:-0.598px;">Game</span>
<svg style="left:1036px;top:110.3px;" width="10.5" height="11" viewBox="0 0 10.5 11"><path d="M3.4 0H9.3Q10.4 0 10.4 1.1V3H8V9Q8 11 6 11H1.1Q0 11 0 9.9V8H2.3V1.1Q2.3 0 3.4 0Z" fill="#e8e8e8"/><path d="M8 1.2V3" stroke="#2a2930" stroke-width="0.6"/></svg>
<svg style="left:1054px;top:111.3px;" width="11.4" height="9" viewBox="0 0 11.4 9"><path d="M0.2 4.5Q2.6 0.3 5.7 0.3Q8.8 0.3 11.2 4.5Q8.8 8.7 5.7 8.7Q2.6 8.7 0.2 4.5Z" fill="#f0f0f0"/><circle cx="5.7" cy="4.5" r="3" fill="#2a2930"/><circle cx="5.7" cy="4.5" r="1.5" fill="#f0f0f0"/></svg>
<svg style="left:915.4499999999999px;top:133.05px;" width="7" height="4.4" viewBox="0 0 7 4.4"><path d="M0.2 0.7Q0.2 0 0.9 0H6.1Q6.8 0 6.8 0.7L3.5 4.3Z" fill="#f0f0f0"/></svg>
<svg style="left:924.05px;top:128.95px;" width="11.6" height="11.6" viewBox="0 0 11.6 11.6"><rect x="0.9" y="0.9" width="9.8" height="9.8" rx="1.3" fill="none" stroke="#a5efac" stroke-width="1.5"/><path d="M1 4.2H10.6M1 7.4H10.6" stroke="#a5efac" stroke-width="1.4"/></svg>
<span class="t" style="left:938.75px;top:126.65px;line-height:16px;font-size:10.5px;color:#bfbec7;letter-spacing:0.160px;">box</span>
<svg style="left:1054px;top:130.35px;" width="11.4" height="9" viewBox="0 0 11.4 9"><path d="M0.2 4.5Q2.6 0.3 5.7 0.3Q8.8 0.3 11.2 4.5Q8.8 8.7 5.7 8.7Q2.6 8.7 0.2 4.5Z" fill="#f0f0f0"/><circle cx="5.7" cy="4.5" r="3" fill="#2a2930"/><circle cx="5.7" cy="4.5" r="1.5" fill="#f0f0f0"/></svg>
<svg style="left:933.1px;top:147.99999999999997px;" width="11.6" height="11.6" viewBox="0 0 11.6 11.6"><rect x="0.3" y="0.3" width="11" height="11" rx="1.2" fill="#a5efac"/><g fill="#2a2930"><rect x="1.7" y="1.7" width="2" height="2"/><rect x="4.8" y="1.7" width="2" height="2"/><rect x="7.9" y="1.7" width="2" height="2"/><rect x="1.7" y="4.8" width="2" height="2"/><rect x="4.8" y="4.8" width="2" height="2"/><rect x="7.9" y="4.8" width="2" height="2"/><rect x="1.7" y="7.9" width="2" height="2"/><rect x="4.8" y="7.9" width="2" height="2"/><rect x="7.9" y="7.9" width="2" height="2"/></g></svg>
<span class="t" style="left:947.8000000000001px;top:145.70px;line-height:16px;font-size:10.5px;color:#bfbec7;letter-spacing:0.137px;">map</span>
<svg style="left:1054px;top:149.39999999999998px;" width="11.4" height="9" viewBox="0 0 11.4 9"><path d="M0.2 4.5Q2.6 0.3 5.7 0.3Q8.8 0.3 11.2 4.5Q8.8 8.7 5.7 8.7Q2.6 8.7 0.2 4.5Z" fill="#f0f0f0"/><circle cx="5.7" cy="4.5" r="3" fill="#2a2930"/><circle cx="5.7" cy="4.5" r="1.5" fill="#f0f0f0"/></svg>
<svg style="left:924.5px;top:171.15px;" width="7" height="4.4" viewBox="0 0 7 4.4"><path d="M0.2 0.7Q0.2 0 0.9 0H6.1Q6.8 0 6.8 0.7L3.5 4.3Z" fill="#f0f0f0"/></svg>
<svg style="left:933.1px;top:167.04999999999998px;" width="11.6" height="11.6" viewBox="0 0 11.6 11.6"><rect x="0.9" y="0.9" width="9.8" height="9.8" rx="1.3" fill="none" stroke="#a5efac" stroke-width="1.5"/><path d="M4.2 1V10.6M7.4 1V10.6" stroke="#a5efac" stroke-width="1.4"/></svg>
<span class="t" style="left:947.8000000000001px;top:164.75px;line-height:16px;font-size:10.5px;color:#bfbec7;letter-spacing:0.423px;">info</span>
<svg style="left:1054px;top:168.45px;" width="11.4" height="9" viewBox="0 0 11.4 9"><path d="M0.2 4.5Q2.6 0.3 5.7 0.3Q8.8 0.3 11.2 4.5Q8.8 8.7 5.7 8.7Q2.6 8.7 0.2 4.5Z" fill="#f0f0f0"/><circle cx="5.7" cy="4.5" r="3" fill="#2a2930"/><circle cx="5.7" cy="4.5" r="1.5" fill="#f0f0f0"/></svg>
<svg style="left:942.15px;top:188.1px;" width="11.4" height="7.6" viewBox="0 0 11.4 7.6"><rect x="0" y="0" width="11.4" height="7.6" rx="1" fill="#a5efac"/><rect x="2.6" y="2.2" width="2.2" height="1.8" fill="#2a2930"/><rect x="6.2" y="2.2" width="2.2" height="1.8" fill="#2a2930"/></svg>
<span class="t" style="left:956.85px;top:183.80px;line-height:16px;font-size:10.5px;color:#bfbec7;letter-spacing:0.322px;">New</span>
<svg style="left:1035.6px;top:187.2px;" width="10.6" height="9.6" viewBox="0 0 10.6 9.6"><path d="M0 4H3.2V1.4Q3.2 0.6 4 0.6H6.4V2.2H9.2V3.6H6.4V6H9.2V7.4H6.4V9H4Q3.2 9 3.2 8.2V5.6H0Z" fill="#e8e8e8"/></svg>
<svg style="left:1054px;top:187.5px;" width="11.4" height="9" viewBox="0 0 11.4 9"><path d="M0.2 4.5Q2.6 0.3 5.7 0.3Q8.8 0.3 11.2 4.5Q8.8 8.7 5.7 8.7Q2.6 8.7 0.2 4.5Z" fill="#f0f0f0"/><circle cx="5.7" cy="4.5" r="3" fill="#2a2930"/><circle cx="5.7" cy="4.5" r="1.5" fill="#f0f0f0"/></svg>
<svg style="left:934.55px;top:207.85px;" width="5.2" height="7" viewBox="0 0 5.2 7"><path d="M0.6 0.3Q0.1 0.3 0.1 0.9V6.1Q0.1 6.7 0.6 6.7L5 3.5Z" fill="#f0f0f0"/></svg>
<svg style="left:942.15px;top:205.14999999999998px;" width="11.6" height="11.6" viewBox="0 0 11.6 11.6"><rect x="0.9" y="0.9" width="9.8" height="9.8" rx="1.3" fill="none" stroke="#a5efac" stroke-width="1.5"/><path d="M4.2 1V10.6M7.4 1V10.6" stroke="#a5efac" stroke-width="1.4"/></svg>
<span class="t" style="left:956.85px;top:202.85px;line-height:16px;font-size:10.5px;color:#bfbec7;letter-spacing:0.271px;">time</span>
<svg style="left:1054px;top:206.54999999999998px;" width="11.4" height="9" viewBox="0 0 11.4 9"><path d="M0.2 4.5Q2.6 0.3 5.7 0.3Q8.8 0.3 11.2 4.5Q8.8 8.7 5.7 8.7Q2.6 8.7 0.2 4.5Z" fill="#f0f0f0"/><circle cx="5.7" cy="4.5" r="3" fill="#2a2930"/><circle cx="5.7" cy="4.5" r="1.5" fill="#f0f0f0"/></svg>
<svg style="left:934.55px;top:226.9px;" width="5.2" height="7" viewBox="0 0 5.2 7"><path d="M0.6 0.3Q0.1 0.3 0.1 0.9V6.1Q0.1 6.7 0.6 6.7L5 3.5Z" fill="#f0f0f0"/></svg>
<svg style="left:942.15px;top:224.2px;" width="11.6" height="11.6" viewBox="0 0 11.6 11.6"><rect x="0.9" y="0.9" width="9.8" height="9.8" rx="1.3" fill="none" stroke="#a5efac" stroke-width="1.5"/><path d="M4.2 1V10.6M7.4 1V10.6" stroke="#a5efac" stroke-width="1.4"/></svg>
<span class="t" style="left:956.85px;top:221.90px;line-height:16px;font-size:10.5px;color:#bfbec7;letter-spacing:-0.215px;">mines</span>
<svg style="left:1054px;top:225.6px;" width="11.4" height="9" viewBox="0 0 11.4 9"><path d="M0.2 4.5Q2.6 0.3 5.7 0.3Q8.8 0.3 11.2 4.5Q8.8 8.7 5.7 8.7Q2.6 8.7 0.2 4.5Z" fill="#f0f0f0"/><circle cx="5.7" cy="4.5" r="3" fill="#2a2930"/><circle cx="5.7" cy="4.5" r="1.5" fill="#f0f0f0"/></svg>
<svg style="left:916.4499999999999px;top:245.95px;" width="5.2" height="7" viewBox="0 0 5.2 7"><path d="M0.6 0.3Q0.1 0.3 0.1 0.9V6.1Q0.1 6.7 0.6 6.7L5 3.5Z" fill="#f0f0f0"/></svg>
<svg style="left:924.05px;top:243.24999999999997px;" width="11.6" height="11.6" viewBox="0 0 11.6 11.6"><rect x="0.2" y="0.2" width="11.2" height="2.4" rx="0.8" fill="#a5efac"/><rect x="0.2" y="3.4" width="11.2" height="8" rx="0.8" fill="#a5efac"/><rect x="5" y="4.5" width="1.6" height="3.6" fill="#2a2930"/><rect x="5" y="9" width="1.6" height="1.5" fill="#2a2930"/></svg>
<span class="t" style="left:938.75px;top:240.95px;line-height:16px;font-size:10.5px;color:#bfbec7;letter-spacing:-0.358px;">NewGame</span>
<svg style="left:1036px;top:243.64999999999998px;" width="10.5" height="11" viewBox="0 0 10.5 11"><path d="M3.4 0H9.3Q10.4 0 10.4 1.1V3H8V9Q8 11 6 11H1.1Q0 11 0 9.9V8H2.3V1.1Q2.3 0 3.4 0Z" fill="#e8e8e8"/><path d="M8 1.2V3" stroke="#2a2930" stroke-width="0.6"/></svg>
<svg style="left:1054px;top:249.45px;" width="11.4" height="6" viewBox="0 0 11.4 6"><path d="M0.6 0.6Q3 4.6 5.7 4.6Q8.4 4.6 10.8 0.6" fill="none" stroke="#5e5c69" stroke-width="1.5"/><path d="M1.5 3.2L0.7 4.6M9.9 3.2L10.7 4.6" stroke="#5e5c69" stroke-width="1.2"/></svg>
<svg style="left:924.05px;top:264.3px;" width="11.6" height="7.6" viewBox="0 0 11.6 7.6"><path d="M3.6 0H10.8Q11.6 0 11.6 0.8V6.8Q11.6 7.6 10.8 7.6H3.6L0 3.8Z" fill="#a5efac"/><circle cx="3.4" cy="3.8" r="0.9" fill="#2a2930"/></svg>
<span class="t" style="left:938.75px;top:260.00px;line-height:16px;font-size:10.5px;color:#bfbec7;letter-spacing:-0.298px;">game_over</span>
<svg style="left:1054px;top:263.7px;" width="11.4" height="9" viewBox="0 0 11.4 9"><path d="M0.2 4.5Q2.6 0.3 5.7 0.3Q8.8 0.3 11.2 4.5Q8.8 8.7 5.7 8.7Q2.6 8.7 0.2 4.5Z" fill="#f0f0f0"/><circle cx="5.7" cy="4.5" r="3" fill="#2a2930"/><circle cx="5.7" cy="4.5" r="1.5" fill="#f0f0f0"/></svg>
<svg style="left:924.05px;top:283.35px;" width="11.6" height="7.6" viewBox="0 0 11.6 7.6"><path d="M3.6 0H10.8Q11.6 0 11.6 0.8V6.8Q11.6 7.6 10.8 7.6H3.6L0 3.8Z" fill="#a5efac"/><circle cx="3.4" cy="3.8" r="0.9" fill="#2a2930"/></svg>
<span class="t" style="left:938.75px;top:279.05px;line-height:16px;font-size:10.5px;color:#bfbec7;letter-spacing:-0.253px;">win</span>
<svg style="left:1054px;top:282.75px;" width="11.4" height="9" viewBox="0 0 11.4 9"><path d="M0.2 4.5Q2.6 0.3 5.7 0.3Q8.8 0.3 11.2 4.5Q8.8 8.7 5.7 8.7Q2.6 8.7 0.2 4.5Z" fill="#f0f0f0"/><circle cx="5.7" cy="4.5" r="3" fill="#2a2930"/><circle cx="5.7" cy="4.5" r="1.5" fill="#f0f0f0"/></svg>
<div style="left:921.3px;top:347.3px;width:69px;height:20.5px;background:linear-gradient(180deg,#46444f 0%,#3f3d48 100%);border:1px solid #45434f;border-bottom:none;border-radius:3px 3px 0 0;"></div>
<span class="t" style="left:933.5px;top:349.30px;line-height:16px;font-size:10.5px;color:#e0e0e0;letter-spacing:0.101px;">Inspector</span>
<div style="left:990.3px;top:349.4px;width:49.7px;height:18px;background:#2d2c34;border:1px solid #3a3843;border-bottom:none;border-radius:3px 3px 0 0;"></div>
<span class="t" style="left:1002.5px;top:350.40px;line-height:16px;font-size:10.5px;color:#b9b8c1;letter-spacing:-0.034px;">Node</span>
<svg style="left:1065px;top:353px;" width="8" height="5" viewBox="0 0 8 5"><path d="M0.5 0.8Q0.5 0.2 1.2 0.2H6.8Q7.5 0.2 7.5 0.8L4 4.6Z" fill="#f0f0f0"/></svg>
<div style="left:898px;top:367.3px;width:178px;height:265.3px;background:linear-gradient(180deg,#413f4a 0%,#34323b 100%);border:1px solid rgba(255,255,255,0.06);border-radius:2px;"></div>
<svg style="left:907.6px;top:377.2px;" width="10.6" height="11.2" viewBox="0 0 10.6 11.2"><path d="M0 0H6.4V4.2H10.6V11.2H0Z" fill="#e8e8e8"/><path d="M7.4 0L10.6 3.2H7.4Z" fill="#e8e8e8"/></svg>
<svg style="left:930.8px;top:378px;" width="13" height="10" viewBox="0 0 13 10"><path d="M0 9.4V1Q0 0.2 0.8 0.2H4L5.2 1.6H10Q10.8 1.6 10.8 2.4V3.2H3L0.4 9.4Z" fill="#e8e8e8"/><path d="M1.2 9.8L3.6 4.2H13L10.6 9.8Z" fill="#e8e8e8"/></svg>
<svg style="left:956px;top:377.2px;" width="11.4" height="11.2" viewBox="0 0 11.4 11.2"><path d="M0 0.8Q0 0 0.8 0H9L11.4 2.4V10.4Q11.4 11.2 10.6 11.2H0.8Q0 11.2 0 10.4Z" fill="#e8e8e8"/><rect x="2.6" y="0" width="5.4" height="3.6" fill="#403e49"/><rect x="5.6" y="0.6" width="1.6" height="2.4" fill="#e8e8e8"/><circle cx="5.7" cy="7.6" r="1.5" fill="#403e49"/></svg>
<svg style="left:1018.8px;top:377.2px;" width="5.8" height="11.6" viewBox="0 0 5.8 11.6"><path d="M5.8 0V11.6L0 5.8Z" fill="#f0f0f0"/></svg>
<svg style="left:1037px;top:377.2px;" width="5.6" height="11.6" viewBox="0 0 5.6 11.6"><path d="M0 0V11.6L5.6 5.8Z" fill="#6a6874"/></svg>
<svg style="left:1055.5px;top:377.3px;" width="11.5" height="11" viewBox="0 0 11.5 11"><path d="M3.3 2.2A4.3 4.3 0 1 1 2.3 8.2" fill="none" stroke="#e8e8e8" stroke-width="1.5"/><path d="M0 4.4L4.6 4.2L2.2 7.8Z" fill="#e8e8e8"/><path d="M6.6 3V5.8L8.6 6.6" stroke="#e8e8e8" stroke-width="1.2" fill="none"/></svg>
<svg style="left:906.5px;top:399.4px;" width="11.2" height="11.2" viewBox="0 0 12 12"><g transform="translate(6 6)"><rect x="-1.25" y="-5.6" width="2.5" height="11.2" transform="rotate(0)" fill="#f0f0f0"/><rect x="-1.25" y="-5.6" width="2.5" height="11.2" transform="rotate(45)" fill="#f0f0f0"/><rect x="-1.25" y="-5.6" width="2.5" height="11.2" transform="rotate(90)" fill="#f0f0f0"/><rect x="-1.25" y="-5.6" width="2.5" height="11.2" transform="rotate(135)" fill="#f0f0f0"/><circle r="4" fill="#f0f0f0"/><circle r="1.7" fill="#403e49"/></g></svg>
<span class="t" style="left:921.7px;top:397.20px;line-height:16px;font-size:10.5px;color:#f0f0f0;letter-spacing:-0.248px;">Game.gd</span>
<svg style="left:1030.7px;top:399.8px;" width="10.6" height="10.6" viewBox="0 0 10.6 10.6"><circle cx="4" cy="4" r="2.9" fill="none" stroke="#f0f0f0" stroke-width="1.7"/><path d="M6.2 6.2L9.6 9.6" stroke="#f0f0f0" stroke-width="2" stroke-linecap="round"/></svg>
<svg style="left:1055.2px;top:399.4px;" width="11.4" height="11.4" viewBox="0 0 12 12"><g transform="translate(6 6)"><rect x="-1.25" y="-5.6" width="2.5" height="11.2" transform="rotate(0)" fill="#f0f0f0"/><rect x="-1.25" y="-5.6" width="2.5" height="11.2" transform="rotate(45)" fill="#f0f0f0"/><rect x="-1.25" y="-5.6" width="2.5" height="11.2" transform="rotate(90)" fill="#f0f0f0"/><rect x="-1.25" y="-5.6" width="2.5" height="11.2" transform="rotate(135)" fill="#f0f0f0"/><circle r="4" fill="#f0f0f0"/><circle r="1.7" fill="#403e49"/></g></svg>
<div style="left:902.3px;top:418.5px;width:169.7px;height:210.7px;background:#2a2930;border:1px solid #232228;border-radius:2px;"></div>
<div style="left:452.3px;top:135px;width:266.7px;height:296.6px;background:transparent;box-shadow:0 1px 10px rgba(0,0,0,0.28);"></div>
<div style="left:456.3px;top:137px;width:258.7px;height:288.6px;background:linear-gradient(180deg,#3f3d48,#35333d);border:1px solid #2d6ba3;border-top-color:#1d4f80;box-shadow:0 0 0 0.6px rgba(45,107,163,0.5);"></div>
<div style="left:457.3px;top:138px;width:256.7px;height:23px;background:#ffffff;"></div>
<div style="left:457.3px;top:161px;width:256.7px;height:1px;background:#2a2930;"></div>
<svg style="left:463px;top:142.3px;" width="12.4" height="12.4" viewBox="0 0 12.4 12.4"><rect width="12.4" height="12.4" rx="2.2" fill="#1f2a36"/><path d="M1.8 4.2L2.9 3.3L3.6 3.9L4.8 3.3L5 2.4H7.4L7.6 3.3L8.8 3.9L9.5 3.3L10.6 4.2V8.6L6.2 10.2L1.8 8.6Z" fill="#4a8bbd"/><circle cx="4.3" cy="6.2" r="1.05" fill="#e8eef4"/><circle cx="8.1" cy="6.2" r="1.05" fill="#e8eef4"/><path d="M1.8 7.6H10.6" stroke="#1f2a36" stroke-width="0.6"/></svg>
<span class="t" style="left:480px;top:141.90px;line-height:16px;font-size:9.6px;color:#1c1c1c;letter-spacing:-0.450px;-webkit-text-stroke:0;">minesweeper</span>
<svg style="left:622px;top:143px;" width="10" height="12" viewBox="0 0 10 12"><path d="M1 5.8H8.6" stroke="#555" stroke-width="1"/></svg>
<svg style="left:656px;top:143.5px;" width="10" height="10" viewBox="0 0 10 10"><rect x="1" y="1" width="7.6" height="7.6" fill="none" stroke="#333" stroke-width="1"/></svg>
<svg style="left:691.5px;top:143.5px;" width="10" height="10" viewBox="0 0 10 10"><path d="M0.8 0.8L8.8 8.8M8.8 0.8L0.8 8.8" stroke="#333" stroke-width="1.05"/></svg>
<div style="left:475.4px;top:166.1px;width:219.96px;height:219.6px;background:#2d2d2d;"></div>
<div style="left:475.40px;top:166.10px;width:24.54px;height:24.50px;background:#989898;border-style:solid;border-width:3px;border-color:#d2d2d2 #727272 #6a6a6a #cbcbcb;"></div>
<div style="left:499.84px;top:166.10px;width:24.54px;height:24.50px;background:#bdbdbd;border-style:solid;border-width:3px;border-color:#d2d2d2 #727272 #6a6a6a #cbcbcb;"></div>
<div style="left:524.28px;top:166.10px;width:24.54px;height:24.50px;background:#989898;border-style:solid;border-width:3px;border-color:#d2d2d2 #727272 #6a6a6a #cbcbcb;"></div>
<div style="left:548.72px;top:166.10px;width:24.54px;height:24.50px;background:#989898;border-style:solid;border-width:3px;border-color:#d2d2d2 #727272 #6a6a6a #cbcbcb;"></div>
<div style="left:573.16px;top:166.10px;width:24.54px;height:24.50px;background:#989898;border-style:solid;border-width:3px;border-color:#d2d2d2 #727272 #6a6a6a #cbcbcb;"></div>
<div style="left:597.60px;top:166.10px;width:24.54px;height:24.50px;background:#989898;border-style:solid;border-width:3px;border-color:#d2d2d2 #727272 #6a6a6a #cbcbcb;"></div>
<div style="left:622.04px;top:166.10px;width:24.54px;height:24.50px;background:#989898;border-style:solid;border-width:3px;border-color:#d2d2d2 #727272 #6a6a6a #cbcbcb;"></div>
<div style="left:646.48px;top:166.10px;width:24.54px;height:24.50px;background:#989898;border-style:solid;border-width:3px;border-color:#d2d2d2 #727272 #6a6a6a #cbcbcb;"></div>
<div style="left:670.92px;top:166.10px;width:24.54px;height:24.50px;background:#989898;border-style:solid;border-width:3px;border-color:#d2d2d2 #727272 #6a6a6a #cbcbcb;"></div>
<div style="left:475.40px;top:190.50px;width:24.54px;height:24.50px;background:#989898;border-style:solid;border-width:3px;border-color:#d2d2d2 #727272 #6a6a6a #cbcbcb;"></div>
<div style="left:499.84px;top:190.50px;width:24.54px;height:24.50px;background:#989898;border-style:solid;border-width:3px;border-color:#d2d2d2 #727272 #6a6a6a #cbcbcb;"></div>
<div style="left:524.28px;top:190.50px;width:24.54px;height:24.50px;background:#989898;border-style:solid;border-width:3px;border-color:#d2d2d2 #727272 #6a6a6a #cbcbcb;"></div>
<div style="left:548.72px;top:190.50px;width:24.54px;height:24.50px;background:#989898;border-style:solid;border-width:3px;border-color:#d2d2d2 #727272 #6a6a6a #cbcbcb;"></div>
<div style="left:573.16px;top:190.50px;width:24.54px;height:24.50px;background:#989898;border-style:solid;border-width:3px;border-color:#d2d2d2 #727272 #6a6a6a #cbcbcb;"></div>
<div style="left:597.60px;top:190.50px;width:24.54px;height:24.50px;background:#989898;border-style:solid;border-width:3px;border-color:#d2d2d2 #727272 #6a6a6a #cbcbcb;"></div>
<div style="left:622.04px;top:190.50px;width:24.54px;height:24.50px;background:#989898;border-style:solid;border-width:3px;border-color:#d2d2d2 #727272 #6a6a6a #cbcbcb;"></div>
<div style="left:646.48px;top:190.50px;width:24.54px;height:24.50px;background:#989898;border-style:solid;border-width:3px;border-color:#d2d2d2 #727272 #6a6a6a #cbcbcb;"></div>
<div style="left:670.92px;top:190.50px;width:24.54px;height:24.50px;background:#989898;border-style:solid;border-width:3px;border-color:#d2d2d2 #727272 #6a6a6a #cbcbcb;"></div>
<div style="left:476.00px;top:215.50px;width:23.44px;height:23.40px;background:#3c3c3c;"></div>
<span class="t" style="left:475.40px;top:218.50px;width:24.44px;text-align:center;line-height:16px;font-size:10.5px;color:#5fd467">2</span>
<div style="left:500.44px;top:215.50px;width:23.44px;height:23.40px;background:#3c3c3c;"></div>
<span class="t" style="left:499.84px;top:218.50px;width:24.44px;text-align:center;line-height:16px;font-size:10.5px;color:#5fd467">2</span>
<div style="left:524.88px;top:215.50px;width:23.44px;height:23.40px;background:#3c3c3c;"></div>
<span class="t" style="left:524.28px;top:218.50px;width:24.44px;text-align:center;line-height:16px;font-size:10.5px;color:#5fd467">2</span>
<div style="left:548.72px;top:214.90px;width:24.54px;height:24.50px;background:#989898;border-style:solid;border-width:3px;border-color:#d2d2d2 #727272 #6a6a6a #cbcbcb;"></div>
<div style="left:573.76px;top:215.50px;width:23.44px;height:23.40px;background:#3c3c3c;"></div>
<span class="t" style="left:573.16px;top:218.50px;width:24.44px;text-align:center;line-height:16px;font-size:10.5px;color:#5fd467">2</span>
<div style="left:598.20px;top:215.50px;width:23.44px;height:23.40px;background:#3c3c3c;"></div>
<span class="t" style="left:597.60px;top:218.50px;width:24.44px;text-align:center;line-height:16px;font-size:10.5px;color:#4c4cc4">1</span>
<div style="left:622.64px;top:215.50px;width:23.44px;height:23.40px;background:#3c3c3c;"></div>
<span class="t" style="left:622.04px;top:218.50px;width:24.44px;text-align:center;line-height:16px;font-size:10.5px;color:#4c4cc4">1</span>
<div style="left:647.08px;top:215.50px;width:23.44px;height:23.40px;background:#3c3c3c;"></div>
<span class="t" style="left:646.48px;top:218.50px;width:24.44px;text-align:center;line-height:16px;font-size:10.5px;color:#4c4cc4">1</span>
<div style="left:671.52px;top:215.50px;width:23.44px;height:23.40px;background:#3c3c3c;"></div>
<span class="t" style="left:670.92px;top:218.50px;width:24.44px;text-align:center;line-height:16px;font-size:10.5px;color:#4c4cc4">1</span>
<div style="left:476.00px;top:239.90px;width:23.44px;height:23.40px;background:#3c3c3c;"></div>
<div style="left:500.44px;top:239.90px;width:23.44px;height:23.40px;background:#3c3c3c;"></div>
<div style="left:524.88px;top:239.90px;width:23.44px;height:23.40px;background:#3c3c3c;"></div>
<span class="t" style="left:524.28px;top:242.90px;width:24.44px;text-align:center;line-height:16px;font-size:10.5px;color:#4c4cc4">1</span>
<div style="left:549.32px;top:239.90px;width:23.44px;height:23.40px;background:#3c3c3c;"></div>
<span class="t" style="left:548.72px;top:242.90px;width:24.44px;text-align:center;line-height:16px;font-size:10.5px;color:#4c4cc4">1</span>
<div style="left:573.76px;top:239.90px;width:23.44px;height:23.40px;background:#3c3c3c;"></div>
<span class="t" style="left:573.16px;top:242.90px;width:24.44px;text-align:center;line-height:16px;font-size:10.5px;color:#4c4cc4">1</span>
<div style="left:598.20px;top:239.90px;width:23.44px;height:23.40px;background:#3c3c3c;"></div>
<div style="left:622.64px;top:239.90px;width:23.44px;height:23.40px;background:#3c3c3c;"></div>
<div style="left:647.08px;top:239.90px;width:23.44px;height:23.40px;background:#3c3c3c;"></div>
<div style="left:671.52px;top:239.90px;width:23.44px;height:23.40px;background:#3c3c3c;"></div>
<div style="left:476.00px;top:264.30px;width:23.44px;height:23.40px;background:#3c3c3c;"></div>
<div style="left:500.44px;top:264.30px;width:23.44px;height:23.40px;background:#3c3c3c;"></div>
<div style="left:524.88px;top:264.30px;width:23.44px;height:23.40px;background:#3c3c3c;"></div>
<div style="left:549.32px;top:264.30px;width:23.44px;height:23.40px;background:#3c3c3c;"></div>
<div style="left:573.76px;top:264.30px;width:23.44px;height:23.40px;background:#3c3c3c;"></div>
<div style="left:598.20px;top:264.30px;width:23.44px;height:23.40px;background:#3c3c3c;"></div>
<div style="left:622.64px;top:264.30px;width:23.44px;height:23.40px;background:#3c3c3c;"></div>
<div style="left:647.08px;top:264.30px;width:23.44px;height:23.40px;background:#3c3c3c;"></div>
<div style="left:671.52px;top:264.30px;width:23.44px;height:23.40px;background:#3c3c3c;"></div>
<div style="left:476.00px;top:288.70px;width:23.44px;height:23.40px;background:#3c3c3c;"></div>
<div style="left:500.44px;top:288.70px;width:23.44px;height:23.40px;background:#3c3c3c;"></div>
<div style="left:524.88px;top:288.70px;width:23.44px;height:23.40px;background:#3c3c3c;"></div>
<div style="left:549.32px;top:288.70px;width:23.44px;height:23.40px;background:#3c3c3c;"></div>
<div style="left:549.02px;top:288.40px;width:24.04px;height:24.00px;border:1px solid #3e5873;border-radius:1.5px;"></div>
<div style="left:573.76px;top:288.70px;width:23.44px;height:23.40px;background:#3c3c3c;"></div>
<div style="left:598.20px;top:288.70px;width:23.44px;height:23.40px;background:#3c3c3c;"></div>
<div style="left:622.64px;top:288.70px;width:23.44px;height:23.40px;background:#3c3c3c;"></div>
<div style="left:647.08px;top:288.70px;width:23.44px;height:23.40px;background:#3c3c3c;"></div>
<div style="left:671.52px;top:288.70px;width:23.44px;height:23.40px;background:#3c3c3c;"></div>
<div style="left:476.00px;top:313.10px;width:23.44px;height:23.40px;background:#3c3c3c;"></div>
<div style="left:500.44px;top:313.10px;width:23.44px;height:23.40px;background:#3c3c3c;"></div>
<div style="left:524.88px;top:313.10px;width:23.44px;height:23.40px;background:#3c3c3c;"></div>
<div style="left:549.32px;top:313.10px;width:23.44px;height:23.40px;background:#3c3c3c;"></div>
<div style="left:573.76px;top:313.10px;width:23.44px;height:23.40px;background:#3c3c3c;"></div>
<span class="t" style="left:573.16px;top:316.10px;width:24.44px;text-align:center;line-height:16px;font-size:10.5px;color:#4c4cc4">1</span>
<div style="left:598.20px;top:313.10px;width:23.44px;height:23.40px;background:#3c3c3c;"></div>
<span class="t" style="left:597.60px;top:316.10px;width:24.44px;text-align:center;line-height:16px;font-size:10.5px;color:#5fd467">2</span>
<div style="left:622.64px;top:313.10px;width:23.44px;height:23.40px;background:#3c3c3c;"></div>
<span class="t" style="left:622.04px;top:316.10px;width:24.44px;text-align:center;line-height:16px;font-size:10.5px;color:#5fd467">2</span>
<div style="left:647.08px;top:313.10px;width:23.44px;height:23.40px;background:#3c3c3c;"></div>
<span class="t" style="left:646.48px;top:316.10px;width:24.44px;text-align:center;line-height:16px;font-size:10.5px;color:#4c4cc4">1</span>
<div style="left:671.52px;top:313.10px;width:23.44px;height:23.40px;background:#3c3c3c;"></div>
<div style="left:476.00px;top:337.50px;width:23.44px;height:23.40px;background:#3c3c3c;"></div>
<div style="left:500.44px;top:337.50px;width:23.44px;height:23.40px;background:#3c3c3c;"></div>
<div style="left:524.88px;top:337.50px;width:23.44px;height:23.40px;background:#3c3c3c;"></div>
<div style="left:549.32px;top:337.50px;width:23.44px;height:23.40px;background:#3c3c3c;"></div>
<div style="left:573.76px;top:337.50px;width:23.44px;height:23.40px;background:#3c3c3c;"></div>
<span class="t" style="left:573.16px;top:340.50px;width:24.44px;text-align:center;line-height:16px;font-size:10.5px;color:#5fd467">2</span>
<div style="left:597.60px;top:336.90px;width:24.54px;height:24.50px;background:#989898;border-style:solid;border-width:3px;border-color:#d2d2d2 #727272 #6a6a6a #cbcbcb;"></div>
<div style="left:622.04px;top:336.90px;width:24.54px;height:24.50px;background:#989898;border-style:solid;border-width:3px;border-color:#d2d2d2 #727272 #6a6a6a #cbcbcb;"></div>
<div style="left:647.08px;top:337.50px;width:23.44px;height:23.40px;background:#3c3c3c;"></div>
<span class="t" style="left:646.48px;top:340.50px;width:24.44px;text-align:center;line-height:16px;font-size:10.5px;color:#4c4cc4">1</span>
<div style="left:671.52px;top:337.50px;width:23.44px;height:23.40px;background:#3c3c3c;"></div>
<div style="left:476.00px;top:361.90px;width:23.44px;height:23.40px;background:#3c3c3c;"></div>
<div style="left:500.44px;top:361.90px;width:23.44px;height:23.40px;background:#3c3c3c;"></div>
<div style="left:524.88px;top:361.90px;width:23.44px;height:23.40px;background:#3c3c3c;"></div>
<div style="left:549.32px;top:361.90px;width:23.44px;height:23.40px;background:#3c3c3c;"></div>
<div style="left:573.76px;top:361.90px;width:23.44px;height:23.40px;background:#3c3c3c;"></div>
<span class="t" style="left:573.16px;top:364.90px;width:24.44px;text-align:center;line-height:16px;font-size:10.5px;color:#5fd467">2</span>
<div style="left:597.60px;top:361.30px;width:24.54px;height:24.50px;background:#989898;border-style:solid;border-width:3px;border-color:#d2d2d2 #727272 #6a6a6a #cbcbcb;"></div>
<div style="left:622.04px;top:361.30px;width:24.54px;height:24.50px;background:#989898;border-style:solid;border-width:3px;border-color:#d2d2d2 #727272 #6a6a6a #cbcbcb;"></div>
<div style="left:647.08px;top:361.90px;width:23.44px;height:23.40px;background:#3c3c3c;"></div>
<span class="t" style="left:646.48px;top:364.90px;width:24.44px;text-align:center;line-height:16px;font-size:10.5px;color:#4c4cc4">1</span>
<div style="left:671.52px;top:361.90px;width:23.44px;height:23.40px;background:#3c3c3c;"></div>
<div style="left:463px;top:404.3px;width:61.5px;height:14px;background:#3d3b46;border:1px solid #4b4956;border-radius:2px;"></div>
<span class="t" style="left:467.5px;top:403.30px;line-height:16px;font-size:10.5px;color:#e0e0e0;letter-spacing:-0.002px;">New Game</span>
<span class="t" style="left:574px;top:403.30px;line-height:16px;font-size:10.5px;color:#e0e0e0;letter-spacing:0.243px;">Time 15</span>
<span class="t" style="left:662.5px;top:403.30px;line-height:16px;font-size:10.5px;color:#e0e0e0;letter-spacing:0.342px;">Mines 10</span>
<svg style="left:4.4px;top:3.0px;" width="12.6" height="12.2" viewBox="0 0 12.6 12.2"><path d="M0.9 4.4L2.2 3.1L3.3 3.9L4.3 3.4L4.1 1.8L5.5 1.4L6 2.6H6.6L7.1 1.4L8.5 1.8L8.3 3.4L9.3 3.9L10.4 3.1L11.7 4.4L11 5.4V8.7Q11 9.6 10.1 9.9L6.3 11.2L2.5 9.9Q1.6 9.6 1.6 8.7V5.4Z" fill="#4b8fc9"/>
<circle cx="4" cy="6.5" r="1.75" fill="#e4ecf4"/><circle cx="8.6" cy="6.5" r="1.75" fill="#e4ecf4"/><circle cx="4.1" cy="6.6" r="1.15" fill="#2c3444"/><circle cx="8.5" cy="6.6" r="1.15" fill="#2c3444"/>
<path d="M1.6 8.5L3.4 8.9V9.5H5.2V8.8H7.4V9.5H9.2V8.9L11 8.5" stroke="#dfe8f2" stroke-width="0.6" fill="none"/></svg>
</div></body></html>
